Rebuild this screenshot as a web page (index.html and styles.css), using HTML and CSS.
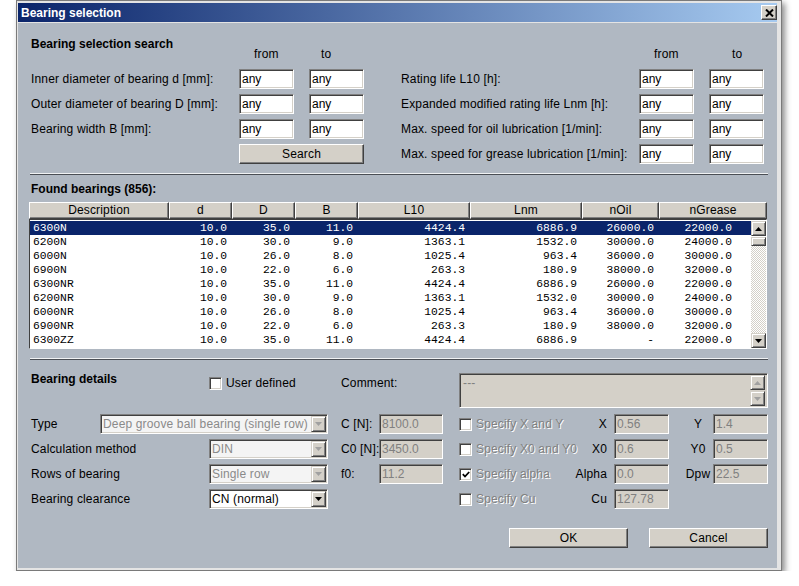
FILE: index.html
```html
<!DOCTYPE html>
<html>
<head>
<meta charset="utf-8">
<title>Bearing selection</title>
<link rel="stylesheet" href="styles.css">
</head>
<body>
<div class="window">
  <div class="titlebar">
    <span class="title">Bearing selection</span>
    <span class="close"><svg width="9" height="8" viewBox="0 0 9 8"><path d="M1 0.5 L8 7.5 M8 0.5 L1 7.5" stroke="#000" stroke-width="2" fill="none"/></svg></span>
  </div>
  <div class="content">
    <div class="heading">Bearing selection search</div>
    <div class="search">
      <div class="sgrid left">
        <span></span><span class="ft from-l">from</span><span class="ft to-l">to</span>
        <span class="lbl">Inner diameter of bearing d [mm]:</span><div class="field">any</div><div class="field">any</div>
        <span class="lbl">Outer diameter of bearing D [mm]:</span><div class="field">any</div><div class="field">any</div>
        <span class="lbl">Bearing width B [mm]:</span><div class="field">any</div><div class="field">any</div>
        <span></span><div class="btn span2">Search</div>
      </div>
      <div class="sgrid right">
        <span></span><span class="ft from-r">from</span><span class="ft to-r">to</span>
        <span class="lbl">Rating life L10 [h]:</span><div class="field">any</div><div class="field">any</div>
        <span class="lbl">Expanded modified rating life Lnm [h]:</span><div class="field">any</div><div class="field">any</div>
        <span class="lbl">Max. speed for oil lubrication [1/min]:</span><div class="field">any</div><div class="field">any</div>
        <span class="lbl">Max. speed for grease lubrication [1/min]:</span><div class="field">any</div><div class="field">any</div>
      </div>
    </div>

    <div class="sep"></div>

    <div class="heading found">Found bearings (856):</div>
    <div class="table">
      <div class="thead">
        <div class="th">Description</div><div class="th">d</div><div class="th">D</div><div class="th">B</div><div class="th">L10</div><div class="th">Lnm</div><div class="th">nOil</div><div class="th">nGrease</div>
      </div>
      <div class="tbody">
        <div class="rows">
          <div class="row sel"><span>6300N</span><span>10.0</span><span>35.0</span><span>11.0</span><span>4424.4</span><span>6886.9</span><span>26000.0</span><span>22000.0</span></div>
          <div class="row"><span>6200N</span><span>10.0</span><span>30.0</span><span>9.0</span><span>1363.1</span><span>1532.0</span><span>30000.0</span><span>24000.0</span></div>
          <div class="row"><span>6000N</span><span>10.0</span><span>26.0</span><span>8.0</span><span>1025.4</span><span>963.4</span><span>36000.0</span><span>30000.0</span></div>
          <div class="row"><span>6900N</span><span>10.0</span><span>22.0</span><span>6.0</span><span>263.3</span><span>180.9</span><span>38000.0</span><span>32000.0</span></div>
          <div class="row"><span>6300NR</span><span>10.0</span><span>35.0</span><span>11.0</span><span>4424.4</span><span>6886.9</span><span>26000.0</span><span>22000.0</span></div>
          <div class="row"><span>6200NR</span><span>10.0</span><span>30.0</span><span>9.0</span><span>1363.1</span><span>1532.0</span><span>30000.0</span><span>24000.0</span></div>
          <div class="row"><span>6000NR</span><span>10.0</span><span>26.0</span><span>8.0</span><span>1025.4</span><span>963.4</span><span>36000.0</span><span>30000.0</span></div>
          <div class="row"><span>6900NR</span><span>10.0</span><span>22.0</span><span>6.0</span><span>263.3</span><span>180.9</span><span>38000.0</span><span>32000.0</span></div>
          <div class="row"><span>6300ZZ</span><span>10.0</span><span>35.0</span><span>11.0</span><span>4424.4</span><span>6886.9</span><span>-</span><span>22000.0</span></div>
        </div>
        <div class="vscroll">
          <div class="sbtn"><svg width="7" height="4" viewBox="0 0 7 4"><path d="M3.5 0 L7 4 L0 4 Z" fill="#000"/></svg></div>
          <div class="sbtn thumb"></div>
          <div class="track"></div>
          <div class="sbtn"><svg width="7" height="4" viewBox="0 0 7 4"><path d="M0 0 L7 0 L3.5 4 Z" fill="#000"/></svg></div>
        </div>
      </div>
    </div>

    <div class="sep"></div>

    <div class="details">
      <div class="d-head">Bearing details</div>
      <div class="d-user cb"><span class="box"></span><span class="txt">User defined</span></div>
      <div class="d-clbl">Comment:</div>
      <div class="d-comment">
        <div class="ctext">---</div>
        <div class="cscroll">
          <div class="sbtn"><svg width="7" height="4" viewBox="0 0 7 4"><path d="M3.5 0 L7 4 L0 4 Z" fill="#a0a0a0"/></svg></div>
          <div class="sbtn"><svg width="7" height="4" viewBox="0 0 7 4"><path d="M0 0 L7 0 L3.5 4 Z" fill="#a0a0a0"/></svg></div>
        </div>
      </div>

      <div class="k-lbl r1">Type</div>
      <div class="combo dis k-wide r1"><span class="val">Deep groove ball bearing (single row)</span><span class="arr"><svg width="7" height="4" viewBox="0 0 7 4"><path d="M0 0 L7 0 L3.5 4 Z" fill="#a0a0a0"/></svg></span></div>
      <div class="k-clbl r1">C [N]:</div>
      <div class="field dis k-cin r1">8100.0</div>
      <div class="cb dis k-chk r1"><span class="box"></span><span class="txt">Specify X and Y</span></div>
      <div class="k-xlbl r1">X</div>
      <div class="field dis k-xin r1">0.56</div>
      <div class="k-ylbl r1">Y</div>
      <div class="field dis k-yin r1">1.4</div>

      <div class="k-lbl r2">Calculation method</div>
      <div class="combo dis k-combo r2"><span class="val">DIN</span><span class="arr"><svg width="7" height="4" viewBox="0 0 7 4"><path d="M0 0 L7 0 L3.5 4 Z" fill="#a0a0a0"/></svg></span></div>
      <div class="k-clbl r2">C0 [N]:</div>
      <div class="field dis k-cin r2">3450.0</div>
      <div class="cb dis k-chk r2"><span class="box"></span><span class="txt">Specify X0 and Y0</span></div>
      <div class="k-xlbl r2">X0</div>
      <div class="field dis k-xin r2">0.6</div>
      <div class="k-ylbl r2">Y0</div>
      <div class="field dis k-yin r2">0.5</div>

      <div class="k-lbl r3">Rows of bearing</div>
      <div class="combo dis k-combo r3"><span class="val">Single row</span><span class="arr"><svg width="7" height="4" viewBox="0 0 7 4"><path d="M0 0 L7 0 L3.5 4 Z" fill="#a0a0a0"/></svg></span></div>
      <div class="k-clbl r3">f0:</div>
      <div class="field dis k-cin r3">11.2</div>
      <div class="cb dis k-chk r3"><span class="box"><svg width="8" height="7" viewBox="0 0 8 7"><path d="M0.8 3.2 L3 5.5 L7.2 1" stroke="#000" stroke-width="1.8" fill="none"/></svg></span><span class="txt">Specify alpha</span></div>
      <div class="k-xlbl r3">Alpha</div>
      <div class="field dis k-xin r3">0.0</div>
      <div class="k-ylbl r3">Dpw</div>
      <div class="field dis k-yin r3">22.5</div>

      <div class="k-lbl r4">Bearing clearance</div>
      <div class="combo k-combo r4"><span class="val">CN (normal)</span><span class="arr"><svg width="7" height="4" viewBox="0 0 7 4"><path d="M0 0 L7 0 L3.5 4 Z" fill="#000"/></svg></span></div>
      <div class="cb dis k-chk r4"><span class="box"></span><span class="txt">Specify Cu</span></div>
      <div class="k-xlbl r4">Cu</div>
      <div class="field dis k-xin r4">127.78</div>
    </div>

    <div class="actions">
      <div class="btn wide">OK</div>
      <div class="btn wide">Cancel</div>
    </div>
  </div>
</div>
</body>
</html>
```

FILE: styles.css
```css
* { box-sizing: border-box; }
html, body { margin: 0; padding: 0; background: #fff; }
body {
  font-family: "Liberation Sans", Arial, sans-serif;
  font-size: 12px;
  letter-spacing: 0.15px;
  color: #000;
}

.window {
  margin-left: 16px;
  width: 766px;
  height: 571px;
  border: 1px solid #7a7a7a;
  background: #e4e4e4;
  padding: 2px 4px 2px 1px;
  display: flex;
  flex-direction: column;
  box-shadow: 3px 3px 6px rgba(0, 0, 0, 0.45);
}

.titlebar {
  flex: none;
  height: 19px;
  margin-bottom: 1px;
  background: linear-gradient(to right, #0a246a, #a6caf0);
  display: flex;
  align-items: center;
  justify-content: space-between;
  padding-left: 3px;
}
.title { color: #fff; font-weight: bold; font-size: 12px; letter-spacing: 0; }
.close {
  width: 16px;
  height: 15px;
  background: #d4d0c8;
  border: 1px solid;
  border-color: #fff #404040 #404040 #fff;
  box-shadow: inset -1px -1px #808080;
  display: flex;
  align-items: center;
  justify-content: center;
}

.content {
  flex: 1;
  background: #b0b8c2;
  padding: 14px 9px 0 13px;
}

.heading { font-weight: bold; line-height: 14px; letter-spacing: 0; }

/* search */
.search { display: flex; gap: 37px; margin-top: -4px; }
.sgrid {
  display: grid;
  grid-template-rows: 17px repeat(4, 20px);
  row-gap: 5px;
  column-gap: 15px;
}
.sgrid.left { grid-template-columns: 193px 55px 55px; }
.sgrid.right { grid-template-columns: 223px 55px 55px; }
.ft { line-height: 14px; }
.from-l { padding-left: 15px; }
.to-l { padding-left: 12px; }
.from-r { padding-left: 15px; }
.to-r { padding-left: 23px; }
.lbl { line-height: 20px; white-space: nowrap; }
.span2 { grid-column: 2 / 4; }

.field {
  height: 20px;
  background: #fff;
  border: 1px solid;
  border-color: #808080 #fff #fff #808080;
  box-shadow: inset 1px 1px #404040, inset -1px -1px #d4d0c8;
  padding: 0 2px;
  line-height: 18px;
  white-space: nowrap;
  overflow: hidden;
  letter-spacing: 0;
}
.field.dis { background: #d4d0c8; color: #808080; }

.btn {
  height: 20px;
  background: #d4d0c8;
  border: 1px solid;
  border-color: #fff #404040 #404040 #fff;
  box-shadow: inset -1px -1px #808080;
  text-align: center;
  line-height: 18px;
}

.sep {
  height: 2px;
  border-top: 1px solid #f0f2f4;
  border-bottom: 1px solid #4a4e54;
  margin: 9px 0 0 -1px;
}

.found { margin-top: 7px; }

/* table */
.table { margin: 6px 0 0 -2px; width: 738px; }
.thead {
  display: grid;
  grid-template-columns: 140px 63px 63px 63px 112px 112px 77px 108px;
  height: 17px;
}
.th {
  background: #d4d0c8;
  border: 1px solid;
  border-color: #fff #404040 #404040 #fff;
  box-shadow: inset -1px -1px #808080;
  text-align: center;
  line-height: 14px;
}
.tbody {
  height: 130px;
  display: flex;
  background: #fff;
  border: 1px solid;
  border-color: #404040 #fff #fff #404040;
}
.rows { flex: 1; padding-top: 1px; }
.row {
  display: grid;
  grid-template-columns: 139px 63px 63px 63px 112px 112px 77px 92px;
  height: 14px;
  line-height: 14px;
  font-family: "Liberation Mono", "Courier New", monospace;
  font-size: 11.3px;
  letter-spacing: 0;
}
.row span { text-align: right; padding-right: 5px; white-space: pre; }
.row span:first-child { text-align: left; padding-left: 3px; padding-right: 0; }
.row span:last-child { padding-right: 19px; }
.row.sel { background: #0a246a; color: #fff; }

.vscroll {
  width: 15px;
  display: flex;
  flex-direction: column;
  padding-top: 1px;
}
.sbtn {
  flex: none;
  height: 15px;
  background: #d4d0c8;
  border: 1px solid;
  border-color: #d4d0c8 #404040 #404040 #d4d0c8;
  box-shadow: inset 1px 1px #fff, inset -1px -1px #808080;
  display: flex;
  align-items: center;
  justify-content: center;
}
.sbtn.thumb { height: 9px; margin-top: 1px; }
.track {
  flex: 1;
  background: repeating-conic-gradient(#d4d0c8 0 25%, #fff 0 50%) 0 0 / 2px 2px;
}

/* details */
.details {
  display: grid;
  grid-template-columns: 69px 109px 119px 13px 38px 64px 16px 111px 44px 55px 44px 55px;
  grid-template-rows: 37px repeat(4, 20px);
  row-gap: 5px;
  margin-top: 12px;
}
.d-head { grid-column: 1 / 3; grid-row: 1; align-self: start; font-weight: bold; line-height: 14px; letter-spacing: 0; }
.d-user { grid-column: 3 / 5; grid-row: 1; align-self: start; margin-top: 4px; }
.d-clbl { grid-column: 5 / 8; grid-row: 1; align-self: start; margin-top: 4px; line-height: 14px; }
.d-comment {
  grid-column: 8 / 13;
  grid-row: 1;
  align-self: start;
  margin-top: 1px;
  height: 35px;
  display: flex;
  background: #d4d0c8;
  border: 1px solid;
  border-color: #808080 #fff #fff #808080;
  box-shadow: inset 1px 1px #404040, inset -1px -1px #d4d0c8;
  padding: 1px;
}
.ctext { flex: 1; color: #808080; line-height: 14px; padding: 1px 2px; }
.cscroll { width: 15px; display: flex; flex-direction: column; gap: 1px; margin-right: 1px; }

.r1 { grid-row: 2; }
.r2 { grid-row: 3; }
.r3 { grid-row: 4; }
.r4 { grid-row: 5; }
.k-lbl { grid-column: 1 / 3; line-height: 20px; white-space: nowrap; }
.k-wide { grid-column: 2 / 4; }
.k-combo { grid-column: 3 / 4; }
.k-clbl { grid-column: 5 / 6; line-height: 20px; white-space: nowrap; }
.k-cin { grid-column: 6 / 7; }
.k-chk { grid-column: 8 / 10; align-self: center; }
.k-xlbl { grid-column: 9 / 10; line-height: 20px; text-align: right; padding-right: 7px; white-space: nowrap; }
.k-xin { grid-column: 10 / 11; }
.k-ylbl { grid-column: 11 / 12; line-height: 20px; text-align: center; padding: 0 2px 0 16px; white-space: nowrap; }
.k-yin { grid-column: 12 / 13; }

.cb { display: flex; align-items: center; gap: 4px; line-height: 14px; white-space: nowrap; }
.box {
  flex: none;
  width: 13px;
  height: 13px;
  background: #fff;
  border: 1px solid;
  border-color: #808080 #fff #fff #808080;
  box-shadow: inset 1px 1px #404040, inset -1px -1px #d4d0c8;
  display: flex;
  align-items: center;
  justify-content: center;
}
.cb.dis .txt { color: #808080; text-shadow: 1px 1px 0 #fff; }

.combo {
  height: 20px;
  display: flex;
  background: #fff;
  border: 1px solid;
  border-color: #808080 #fff #fff #808080;
  box-shadow: inset 1px 1px #404040, inset -1px -1px #d4d0c8;
  padding: 1px;
}
.combo .val { flex: 1; line-height: 16px; padding-left: 1px; white-space: nowrap; overflow: hidden; }
.combo .arr {
  flex: none;
  width: 15px;
  background: #d4d0c8;
  border: 1px solid;
  border-color: #d4d0c8 #404040 #404040 #d4d0c8;
  box-shadow: inset 1px 1px #fff, inset -1px -1px #808080;
  display: flex;
  align-items: center;
  justify-content: center;
}
.combo.dis { background: #f4f4f4; }
.combo.dis .val { color: #8a8a8a; }

.actions {
  display: flex;
  justify-content: flex-end;
  gap: 21px;
  margin-top: 19px;
}
.btn.wide { width: 119px; }
```
